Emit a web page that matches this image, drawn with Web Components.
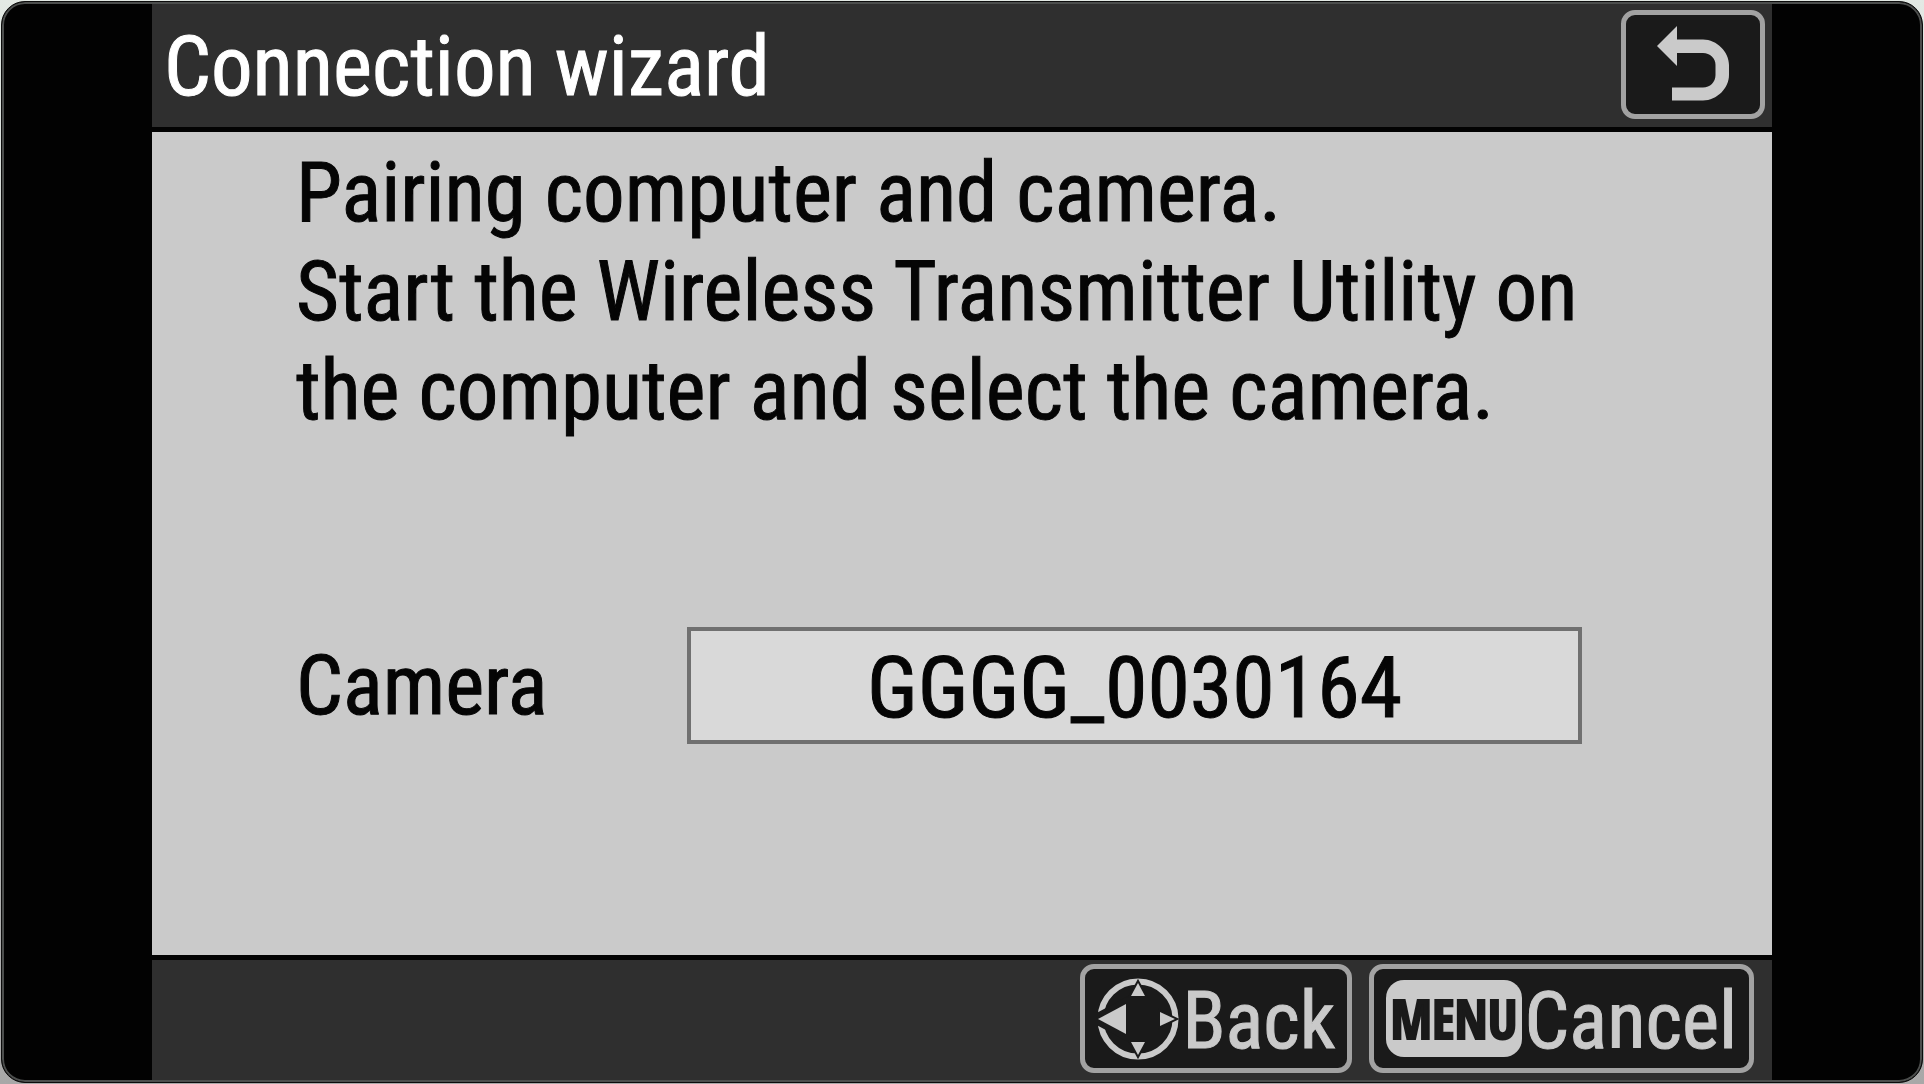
<!DOCTYPE html>
<html lang="en">
<head>
<meta charset="utf-8">
<title>Connection wizard</title>
<style>
html, body {
    margin: 0;
    min-height: 100vh;
}

body {
    box-sizing: border-box;
    display: flex;
    padding: 1px;
    background: linear-gradient(#e3e9e4, #a8a8a8);
    font-family: 'Roboto Condensed', 'Open Sans Condensed', Roboto, sans-serif;
    -webkit-text-stroke: 1px;
}
</style>
</head>
<body>

<camera-screen>
    <title-bar slot="header" heading="Connection wizard"></title-bar>
    <wizard-message>
        Pairing computer and camera.<br>
        Start the Wireless Transmitter Utility on the computer and select the camera.
    </wizard-message>
    <name-field label="Camera" value="GGGG_0030164"></name-field>
    <key-button slot="footer"><pad-icon slot="icon"></pad-icon>Back</key-button>
    <key-button slot="footer"><menu-badge slot="icon">MENU</menu-badge>Cancel</key-button>
</camera-screen>

<script>
function makeTemplate(html) {
    const template = document.createElement('template');
    template.innerHTML = html;
    return template;
}

class BaseElement extends HTMLElement {
    constructor() {
        super();
        this.attachShadow({ mode: 'open' });
        this.shadowRoot.appendChild(this.constructor.template.content.cloneNode(true));
    }
}


class CameraScreen extends BaseElement {
    static template = makeTemplate(`
<style>
:host {
    flex: 1;
    position: relative;
    box-sizing: border-box;
    display: flex;
    flex-direction: column;
    padding: 2px 7.8%;
    border: 1px solid #0c0c0c;
    border-radius: 24px;
    overflow: hidden;
    background: #020202;
}

/* thin bevel of the bezel, over the bars */
:host::after {
    content: '';
    position: absolute;
    inset: 0;
    border: 2px solid #4c4e4d;
    border-radius: 23px;
    pointer-events: none;
}

header {
    background: #2f2f2f;
    border-bottom: 5px solid #020202;
}

main {
    flex: 1;
    display: flex;
    flex-direction: column;
    gap: 187px;
    padding: 11px 144px;
    background: #cacaca;
}

footer {
    display: flex;
    justify-content: flex-end;
    gap: 17px;
    padding: 4px 18px 7px;
    border-top: 5px solid #020202;
    background: #2f2f2f;
}
</style>
<header><slot name="header"></slot></header>
<main><slot></slot></main>
<footer><slot name="footer"></slot></footer>
`);
}


class TitleBar extends BaseElement {
    static template = makeTemplate(`
<style>
:host {
    display: flex;
    justify-content: space-between;
    align-items: center;
    padding: 6px 7px 8px 12px;
    color: #fff;
}

h1 {
    margin: 0;
    padding-top: 4px;
    font-size: 83px;
    line-height: 99px;
    font-weight: inherit;
}

button {
    box-sizing: border-box;
    width: 144px;
    height: 109px;
    padding: 0;
    border: 5px solid #a2a2a2;
    border-radius: 14px;
    background: #1a1a1a;
}

svg {
    display: block;
    margin: 0 auto;
}
</style>
<h1></h1>
<button aria-label="Return">
    <svg width="134" height="99" viewBox="0 0 134 99" fill="#cacaca">
        <path d="M31 31 51 11V24.500H77C91 24.500 103 37 103 50V60C103 73 91 85.500 77 85.500H46V72.500H77C84 72.500 89.500 67 89.500 60V50C89.500 43 84 38 77 38H51V51Z"/>
    </svg>
</button>
`);

    connectedCallback() {
        this.shadowRoot.querySelector('h1').innerText = this.getAttribute('heading');
    }
}


class WizardMessage extends BaseElement {
    static template = makeTemplate(`
<style>
:host {
    display: block;
    color: #050505;
    font-size: 83px;
    line-height: 99px;
}

p {
    margin: 0;
}
</style>
<p><slot></slot></p>
`);
}


class NameField extends BaseElement {
    static template = makeTemplate(`
<style>
:host {
    display: grid;
    grid-template-columns: 391px 1fr;
    align-items: center;
    margin-right: 46px;
    color: #050505;
    font-size: 83px;
}

input {
    box-sizing: border-box;
    width: 100%;
    height: 117px;
    padding: 4px 0 0;
    border: 4px solid #707070;
    background: #d9d9d9;
    color: inherit;
    font: inherit;
    font-size: 86px;
    text-align: center;
    -webkit-text-stroke: inherit;
}
</style>
<label for="name"></label>
<input id="name" readonly>
`);

    connectedCallback() {
        this.shadowRoot.querySelector('label').innerText = this.getAttribute('label');
        this.shadowRoot.querySelector('input').value = this.getAttribute('value');
    }
}


class KeyButton extends BaseElement {
    static template = makeTemplate(`
<style>
:host {
    display: block;
}

button {
    box-sizing: border-box;
    display: flex;
    align-items: center;
    gap: 3px;
    height: 109px;
    padding: 0 12px;
    border: 5px solid #a2a2a2;
    border-radius: 14px;
    background: #1a1a1a;
    color: #cacaca;
    font-family: inherit;
    font-size: 79px;
    line-height: 99px;
}

span {
    padding-top: 6px;
}
</style>
<button><slot name="icon"></slot><span><slot></slot></span></button>
`);
}


class PadIcon extends BaseElement {
    static template = makeTemplate(`
<style>
:host {
    display: block;
}

svg {
    display: block;
}
</style>
<svg width="82" height="82" viewBox="0 0 82 82">
    <circle cx="41" cy="41" r="37.500" fill="none" stroke="#cacaca" stroke-width="6"/>
    <g fill="#cacaca" stroke="#1a1a1a" stroke-width="4" paint-order="stroke">
        <path d="M1 41 29 26V56Z" stroke-width="12"/>
        <path d="M41 5 48 18H34Z"/>
        <path d="M41 77 48 64H34Z"/>
        <path d="M78 41 63 34V48Z"/>
    </g>
</svg>
`);
}


class MenuBadge extends BaseElement {
    static template = makeTemplate(`
<style>
:host {
    box-sizing: border-box;
    display: block;
    min-width: 135px;
    padding: 0 4px;
    border-radius: 18px;
    background: #cacaca;
    color: #1a1a1a;
    font-family: 'Open Sans Condensed', sans-serif;
    font-size: 53px;
    line-height: 77px;
    font-weight: bold;
    -webkit-text-stroke: 2px;
    text-align: center;
}
</style>
<slot></slot>
`);
}


customElements.define('camera-screen', CameraScreen);
customElements.define('title-bar', TitleBar);
customElements.define('wizard-message', WizardMessage);
customElements.define('name-field', NameField);
customElements.define('key-button', KeyButton);
customElements.define('pad-icon', PadIcon);
customElements.define('menu-badge', MenuBadge);
</script>
</body>
</html>
